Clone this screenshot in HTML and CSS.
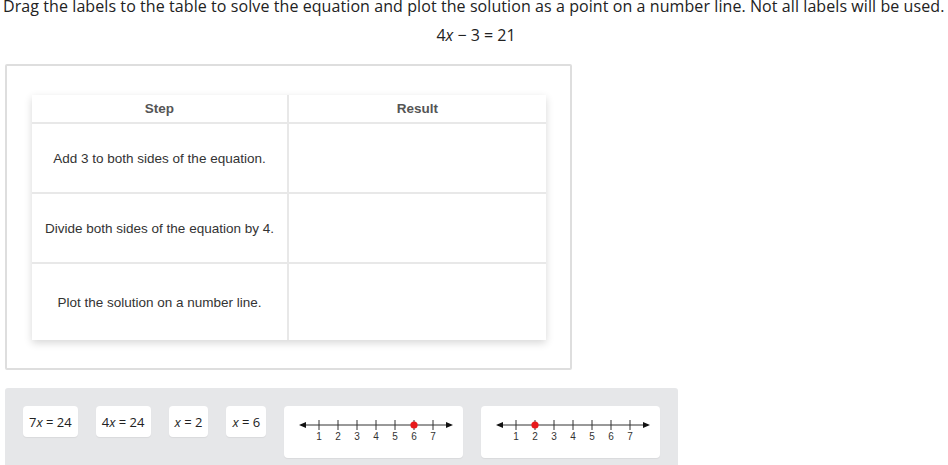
FILE: index.html
```html
<!DOCTYPE html>
<html>
<head>
<meta charset="utf-8">
<link rel="stylesheet" href="styles.css">
</head>
<body>
<p class="prompt">Drag the labels to the table to solve the equation and plot the solution as a point on a number line. Not all labels will be used.</p>
<p class="equation">4<i>x</i> − 3 = 21</p>
<div class="dropbox">
  <div class="table">
    <div class="cell head">Step</div>
    <div class="cell head">Result</div>
    <div class="cell r1">Add 3 to both sides of the equation.</div>
    <div class="cell r1 empty"></div>
    <div class="cell r2">Divide both sides of the equation by 4.</div>
    <div class="cell r2 empty"></div>
    <div class="cell r3">Plot the solution on a number line.</div>
    <div class="cell r3 empty"></div>
  </div>
</div>
<div class="bank">
  <div class="tile">7<i>x</i>&nbsp;=&nbsp;24</div>
  <div class="tile">4<i>x</i>&nbsp;=&nbsp;24</div>
  <div class="tile"><i>x</i>&nbsp;=&nbsp;2</div>
  <div class="tile"><i>x</i>&nbsp;=&nbsp;6</div>
  <div class="tile nl">
    <svg width="154" height="34" viewBox="0 0 154 34">
      <line x1="2" y1="13" x2="152" y2="13" stroke="#333" stroke-width="1"/>
      <polygon points="0,13 7,10 7,16" fill="#111"/>
      <polygon points="154,13 147,10 147,16" fill="#111"/>
      <g stroke="#333" stroke-width="1">
        <line x1="20" y1="8" x2="20" y2="18"/><line x1="39" y1="8" x2="39" y2="18"/><line x1="58" y1="8" x2="58" y2="18"/><line x1="77" y1="8" x2="77" y2="18"/><line x1="96" y1="8" x2="96" y2="18"/><line x1="115" y1="8" x2="115" y2="18"/><line x1="134" y1="8" x2="134" y2="18"/>
      </g>
      <g class="nlnum" text-anchor="middle">
        <text x="20" y="28">1</text><text x="39" y="28">2</text><text x="58" y="28">3</text><text x="77" y="28">4</text><text x="96" y="28">5</text><text x="115" y="28">6</text><text x="134" y="28">7</text>
      </g>
      <circle cx="115" cy="13" r="3.6" fill="#e8191c"/>
    </svg>
  </div>
  <div class="tile nl">
    <svg width="154" height="34" viewBox="0 0 154 34">
      <line x1="2" y1="13" x2="152" y2="13" stroke="#333" stroke-width="1"/>
      <polygon points="0,13 7,10 7,16" fill="#111"/>
      <polygon points="154,13 147,10 147,16" fill="#111"/>
      <g stroke="#333" stroke-width="1">
        <line x1="20" y1="8" x2="20" y2="18"/><line x1="39" y1="8" x2="39" y2="18"/><line x1="58" y1="8" x2="58" y2="18"/><line x1="77" y1="8" x2="77" y2="18"/><line x1="96" y1="8" x2="96" y2="18"/><line x1="115" y1="8" x2="115" y2="18"/><line x1="134" y1="8" x2="134" y2="18"/>
      </g>
      <g class="nlnum" text-anchor="middle">
        <text x="20" y="28">1</text><text x="39" y="28">2</text><text x="58" y="28">3</text><text x="77" y="28">4</text><text x="96" y="28">5</text><text x="115" y="28">6</text><text x="134" y="28">7</text>
      </g>
      <circle cx="39" cy="13" r="3.6" fill="#e8191c"/>
    </svg>
  </div>
</div>
</body>
</html>
```
FILE: styles.css
```css
html, body {
  margin: 0;
  padding: 0;
  background: #fff;
  overflow: hidden;
}
body {
  font-family: "Open Sans", "Liberation Sans", sans-serif;
  color: #222;
  width: 948px;
  height: 465px;
}
.prompt {
  margin: -6px 0 0 0;
  padding-left: 3px;
  font-size: 16px;
  line-height: 24px;
  white-space: nowrap;
  letter-spacing: 0.08px;
}
.equation {
  margin: 5px 0 0 0;
  font-size: 16px;
  line-height: 24px;
  text-align: center;
  padding-left: 4px;
}
.dropbox {
  margin: 17px 0 0 5px;
  border: 2px solid #dedede;
  border-radius: 2px;
  padding: 29px 0 0 25px;
  box-sizing: border-box;
  width: 567px;
  height: 306px;
}
.table {
  display: grid;
  grid-template-columns: 257px 257px;
  grid-template-rows: 29px 70px 70px 76px;
  width: 514px;
  background: #fff;
  box-shadow: 0 3px 8px rgba(0,0,0,0.16);
  font-family: "Liberation Sans", Arial, sans-serif;
  font-size: 13.5px;
  color: #333;
}
.cell {
  display: flex;
  align-items: center;
  justify-content: center;
  text-align: center;
  border-bottom: 2px solid #e8e8e8;
  box-sizing: border-box;
}
.cell:nth-child(odd) { border-right: 2px solid #e8e8e8; }
.cell.r3 { border-bottom: none; }
.head {
  font-weight: bold;
  color: #555;
}
.bank {
  margin: 18px 0 0 5px;
  width: 673px;
  height: 90px;
  background: #e6e7e9;
  border-radius: 3px;
  padding: 18px;
  box-sizing: border-box;
  display: flex;
  align-items: flex-start;
  gap: 18px;
}
.tile {
  background: #fff;
  border-radius: 4px;
  height: 31px;
  padding: 0 6px;
  display: flex;
  align-items: center;
  font-family: "Open Sans", sans-serif;
  font-size: 13px;
  color: #222;
  white-space: nowrap;
  box-shadow: 0 1px 1px rgba(0,0,0,0.06);
}
.tile.nl {
  height: 52px;
  width: 181px;
  box-sizing: border-box;
  padding: 6px 0 0 15px;
  align-items: flex-start;
}
.nlnum {
  font-family: "Liberation Sans", Arial, sans-serif;
  font-size: 10px;
  fill: #333;
}
```
